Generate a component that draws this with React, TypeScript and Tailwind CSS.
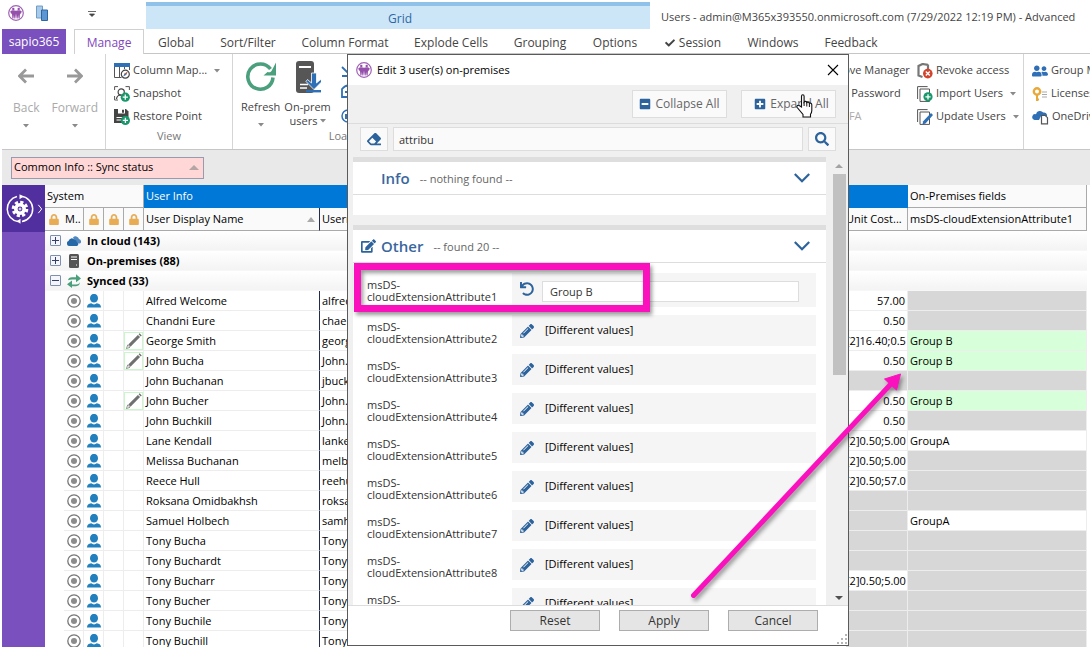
import type { ReactNode } from "react";
import {
  FaCheck,
  FaEdit,
  FaEraser,
  FaKey,
  FaLock,
  FaMinusSquare,
  FaPencilAlt,
  FaPlusSquare,
  FaSearch,
  FaUndo,
  FaUserFriends,
} from "react-icons/fa";

type IconProps = { className?: string };

function Logo({ className = "size-4" }: IconProps) {
  return (
    <svg viewBox="0 0 16 16" className={className} aria-hidden="true">
      <circle cx="8" cy="8" r="7.3" fill="#fff" stroke="#a062b5" strokeWidth="1.2" />
      <circle cx="5.3" cy="3.9" r="1.2" fill="#9450ab" />
      <circle cx="10.7" cy="3.9" r="1.2" fill="#9450ab" />
      <path d="M2.2 6.4c1.200-1.300 4-1.500 5.800-.6 1.800-.9 4.600-.7 5.800.6l-1.200 3.200-.5-1.800-.5 5.600h-1l-.5-3.400-.5 3.400h-.9L8 8.500l-.7 4.900h-.9l-.5-3.400-.5 3.400h-1l-.5-5.600-.5 1.800z" fill="#9450ab" />
    </svg>
  );
}

function PlusBadge({ x, y }: { x: number; y: number }) {
  return (
    <g transform={`translate(${x} ${y})`}>
      <circle r="4.600" fill="#17976a" />
      <path d="M-2.600 0h5.200M0-2.600v5.200" stroke="#fff" strokeWidth="1.300" />
    </g>
  );
}

function ColumnMapIcon() {
  return (
    <svg viewBox="0 0 16 16" className="size-4">
      <path d="M.5 3v11.500h7M5.500 3v11M10.500 3v3M15.500 3v4" fill="none" stroke="#555" />
      <path d="M0 0h16v4H0z" fill="#2f6fb5" />
      <circle cx="11.300" cy="11.200" r="4" fill="#fff" stroke="#444" strokeWidth="1.200" />
      <path d="M13.500 9l-1.500 3-2.800 1.500 1.300-3z" fill="#2f6fb5" />
      <path d="M13.500 9l-1.500 3-1.500-1.500z" fill="#d35a2a" />
    </svg>
  );
}

function SnapshotIcon() {
  return (
    <svg viewBox="0 0 16 16" className="size-4">
      <path d="M.6 4V.6H4M11.500.6h3.900V4M.6 10v4H4" fill="none" stroke="#555" />
      <circle cx="7.200" cy="6" r="3.100" fill="none" stroke="#444" strokeWidth="1.200" />
      <path d="M2.500 13c.3-3 2-4 4.500-4" fill="none" stroke="#444" strokeWidth="1.200" />
      <PlusBadge x={11.3} y={11.2} />
    </svg>
  );
}

function RestoreIcon() {
  return (
    <svg viewBox="0 0 16 16" className="size-4">
      <path d="M0 0h12l2.500 2.500V14H0z" fill="#444" />
      <path d="M4 0h7v4.500H4z" fill="#fff" />
      <path d="M8 .8h2v3H8z" fill="#444" />
      <path d="M2.500 8h9v1h-9zM2.500 10.500h5v1h-5z" fill="#fff" />
      <PlusBadge x={11.4} y={11.4} />
    </svg>
  );
}

function RefreshIcon() {
  return (
    <svg viewBox="0 0 32 32" className="size-8">
      <path d="M28 16.500A12.600 12.600 0 1 1 25.500 8" fill="none" stroke="#4a9f7c" strokeWidth="3.600" />
      <path d="M31 1.500v13H18.500l4-3.500c2 .5 3 .4 4-1z" fill="#4a9f7c" />
    </svg>
  );
}

function ServerDownIcon() {
  return (
    <svg viewBox="0 0 26 32" className="h-8 w-[26px]">
      <rect x="1" y="0" width="18" height="32" rx="3" fill="#565656" />
      <path d="M4 5h12v2H4z" fill="#fff" />
      <path d="M5 23.500h8M5 27h7" stroke="#fff" strokeWidth="1.400" />
      <path d="M16.500 12h5v10l4-3.500 1.500 2L19 28.600 11 20.500l1.500-2 4 3.500z" fill="#2f6fb5" stroke="#fff" strokeWidth=".8" />
      <path d="M11 29h15v2.400H11z" fill="#2f6fb5" />
    </svg>
  );
}

function RevokeIcon() {
  return (
    <svg viewBox="0 0 16 16" className="size-4">
      <path d="M11 1.600v5M11 1.800L5.500 1 1.500 3v9.500l4 1.500" fill="none" stroke="#777" strokeWidth="2.200" />
      <circle cx="10.800" cy="10.600" r="4.800" fill="#d2422c" />
      <path d="M8.800 8.600l4 4M12.800 8.600l-4 4" stroke="#fff" strokeWidth="1.400" />
    </svg>
  );
}

function PagesIcon({ edit = false }: { edit?: boolean }) {
  return (
    <svg viewBox="0 0 16 16" className="size-4">
      <path d="M.6 13V.6h10" fill="none" stroke="#555" />
      <path d="M3 15.400V3h9.500v12.400z" fill="#fff" stroke="#555" />
      {edit ? (
        <path d="M14 4l2 2-7.500 8.500-3 1 .7-3.200z" fill="#2f6fb5" />
      ) : (
        <PlusBadge x={11} y={10.8} />
      )}
    </svg>
  );
}

function OneDriveIcon() {
  return (
    <svg viewBox="0 0 17 16" className="h-4 w-[17px]">
      <path d="M4 5.200A4 4 0 0 1 11.200 3.600 3 3 0 0 1 15 7H9L7 11H2.500A2.900 2.900 0 0 1 4 5.200z" fill="#2f6fb5" />
      <path d="M9.500 6.500h3.800l2.200 2.200v6.200h-6z" fill="#fff" stroke="#555" strokeWidth="1.200" />
    </svg>
  );
}

function PersonIcon() {
  return (
    <svg viewBox="0 0 14 14" className="mx-auto size-3.5">
      <ellipse cx="7" cy="4.200" rx="4" ry="4.400" fill="#2180bd" />
      <path d="M0 13.500c0-2.800 1.500-3.700 4.200-4.200Q7 11.500 9.800 9.300c2.700.5 4.200 1.400 4.200 4.200z" fill="#2180bd" />
    </svg>
  );
}

function StatusIcon() {
  return (
    <svg viewBox="0 0 14 14" className="mx-auto size-3.5">
      <circle cx="7" cy="7" r="6.200" fill="none" stroke="#777" strokeWidth="1.300" />
      <circle cx="7" cy="7" r="3" fill="#8c8c8c" />
    </svg>
  );
}

function EditedIcon() {
  return (
    <span className="flex h-[18px] w-[19px] items-center justify-center border border-[#c9f7c9]">
      <svg viewBox="0 0 16 16" className="size-4">
        <path d="M.4 15.600l1.300-3.600 2.300 2.300z" fill="none" stroke="#6b6b6b" strokeWidth=".7" />
        <path d="M2.300 11.500L11.900 1.900l2.200 2.200-9.600 9.600z" fill="#707070" />
        <path d="M12.600 1.200l1-.9 2.100 2.100-.9 1z" fill="#6b6b6b" />
      </svg>
    </span>
  );
}

function SyncIcon() {
  return (
    <svg viewBox="0 0 14 14" className="size-3.5">
      <path d="M1 6.200Q1.500 3.200 5 3.200h4V.3l5 4.200-5 3.700V5.600H5Q3 5.600 1 6.200z" fill="#4a9f7c" />
      <path d="M13 7.800Q12.500 10.400 9 10.400H5V6.500L0 10.300l5 3.700v-1.800h4Q13 12 13 7.800z" fill="#4a9f7c" />
    </svg>
  );
}

function ServerIcon() {
  return (
    <svg viewBox="0 0 14 14" className="size-3.5">
      <rect x="2" width="10" height="14" rx="1.500" fill="#555" />
      <path d="M4 3h6M4 5.500h6M9 11h1" stroke="#fff" />
    </svg>
  );
}

function CloudsIcon() {
  return (
    <svg viewBox="0 0 14 14" className="size-3.5">
      <path d="M6 3.500a3.500 3.500 0 0 1 6 1.500 2.500 2.500 0 0 1 1 4.500H9z" fill="#4f86c0" />
      <path d="M1.500 7a3.300 3.300 0 0 1 6-1.200 2.400 2.400 0 0 1 2.300 2.400 2 2 0 0 1 .2 3.800H2.500A2.600 2.600 0 0 1 1.500 7z" fill="#2667a8" />
    </svg>
  );
}

function Caret({ className = "" }: IconProps) {
  return (
    <svg viewBox="0 0 6 4" className={`h-1 w-1.5 shrink-0 ${className}`} aria-hidden="true">
      <path d="M0 0h6L3 3.500z" fill="#8a8a8a" />
    </svg>
  );
}

function GearCycle() {
  return (
    <svg viewBox="0 0 30 30" className="size-[30px]">
      <g fill="none" stroke="#fff">
        <path d="M16 2.300A12.700 12.700 0 0 1 17 27.500M13 27.500A12.700 12.700 0 0 1 12 2.600" strokeWidth="1.500" />
        <circle cx="15" cy="15" r="6.800" strokeWidth="3" strokeDasharray="3.200 2.140" />
        <circle cx="15" cy="15" r="4.200" strokeWidth="3.600" />
        <circle cx="15" cy="15" r="1" strokeWidth="1" />
      </g>
      <path d="M14.500.2l4.200 2.300-4.200 2.700zM15.500 24.800v5l-4-2.600z" fill="#fff" />
    </svg>
  );
}

const TABS = [
  ["Global", "w-16"],
  ["Sort/Filter", "w-20"],
  ["Column Format", "w-[114px]"],
  ["Explode Cells", "w-[98px]"],
  ["Grouping", "w-20"],
  ["Options", "w-[70px]"],
  ["Session", "w-[86px]"],
  ["Windows", "w-[74px]"],
  ["Feedback", "w-[82px]"],
];

function RibbonItem({ icon, label, menu = false, muted = false }: { icon?: ReactNode; label: string; menu?: boolean; muted?: boolean }) {
  return (
    <button className={`flex h-[23px] items-center gap-[3px] whitespace-nowrap ${muted ? "text-[#aaa]" : ""}`}>
      {icon}
      <span>{label}</span>
      {menu && <Caret className="ml-1" />}
    </button>
  );
}

function NavButton({ label, back = false }: { label: string; back?: boolean }) {
  return (
    <button className="flex flex-col items-center text-[#aaa]">
      <svg viewBox="0 0 16 16" className={`mt-1.5 mb-3.5 size-4 ${back ? "rotate-180" : ""}`}>
        <path d="M0 8h14M8 1.500L14.500 8 8 14.500" fill="none" stroke="#999" strokeWidth="2.800" />
      </svg>
      <span className="leading-5">{label}</span>
      <Caret className="mt-1.5" />
    </button>
  );
}

function Ribbon() {
  return (
    <section className="flex h-24 shrink-0 overflow-hidden border-b border-[#c6c6c6] text-[11px] text-[#444]">
      <div className="flex w-[104px] shrink-0 items-start justify-center gap-3 border-r border-[#d5d5d5] pt-2 pl-1 text-[12px]">
        <NavButton label="Back" back />
        <NavButton label="Forward" />
      </div>
      <div className="flex w-[127px] shrink-0 flex-col border-r border-[#d5d5d5] pt-[5px] pl-2">
        <RibbonItem icon={<ColumnMapIcon />} label="Column Map..." menu />
        <RibbonItem icon={<SnapshotIcon />} label="Snapshot" />
        <RibbonItem icon={<RestoreIcon />} label="Restore Point" />
        <span className="pr-2 text-center leading-4 text-[#777]">View</span>
      </div>
      <div className="flex w-[587px] shrink-0 items-start gap-1 pt-[7px] pl-2">
        <button className="flex flex-col items-center">
          <RefreshIcon />
          <span className="mt-1 leading-5">Refresh</span>
          <Caret className="mt-1.5" />
        </button>
        <button className="flex flex-col items-center">
          <ServerDownIcon />
          <span className="mt-1.5 leading-4">On-prem</span>
          <span className="flex items-center gap-0.5 leading-3">
            users <Caret />
          </span>
        </button>
        <div className="ml-1.5 flex flex-col items-start">
          <svg viewBox="0 0 14 67" className="h-[67px] w-3.5">
            <path d="M7 1v10M1 6l6 6 6-6M1 15h12M1 36h12v-8Q7 21 1 28zM4 31h6" fill="none" stroke="#2f6fb5" strokeWidth="1.800" />
            <circle cx="7" cy="55" r="6" fill="none" stroke="#2f6fb5" strokeWidth="1.500" />
            <path d="M4 53h6v5H4z" fill="#2f6fb5" />
          </svg>
          <span className="-ml-3 leading-4 text-[#777]">Load</span>
        </div>
      </div>
      <div className="flex w-[97px] shrink-0 flex-col items-start pt-[5px]">
        <RibbonItem label="Remove Manager" />
        <RibbonItem label="Reset Password" />
        <RibbonItem label="Set MFA" muted />
      </div>
      <div className="flex w-[107px] shrink-0 flex-col items-start border-r border-[#d5d5d5] pt-[5px]">
        <RibbonItem icon={<RevokeIcon />} label="Revoke access" />
        <RibbonItem icon={<PagesIcon />} label="Import Users" menu />
        <RibbonItem icon={<PagesIcon edit />} label="Update Users" menu />
      </div>
      <div className="flex flex-col items-start pt-[5px] pl-2">
        <RibbonItem icon={<FaUserFriends className="size-4 text-[#2f6fb5]" />} label="Group M" />
        <RibbonItem
          icon={
            <svg viewBox="0 0 16 16" className="size-4">
              <circle cx="5" cy="5.500" r="3.200" fill="none" stroke="#e8a93a" strokeWidth="2.400" />
              <path d="M5 8v7M5 13.500h2" stroke="#e8a93a" strokeWidth="2" />
              <path d="M10 6h5M10 8.500h5M10 11h5" stroke="#aaa" />
            </svg>
          }
          label="Licenses"
        />
        <RibbonItem icon={<OneDriveIcon />} label="OneDrive" />
      </div>
    </section>
  );
}

type Row = { name: string; user: string; cost?: string; attr?: string; edited?: boolean };

const ROWS: Row[] = [
  { name: "Alfred Welcome", user: "alfred", cost: "57.00" },
  { name: "Chandni Eure", user: "chae", cost: "0.50" },
  { name: "George Smith", user: "georg", cost: "[2]16.40;0.5", attr: "Group B", edited: true },
  { name: "John Bucha", user: "John.", cost: "0.50", attr: "Group B", edited: true },
  { name: "John Buchanan", user: "jbuck" },
  { name: "John Bucher", user: "John.", cost: "0.50", attr: "Group B", edited: true },
  { name: "John Buchkill", user: "John.", cost: "0.50" },
  { name: "Lane Kendall", user: "lanke", cost: "[2]0.50;5.00", attr: "GroupA" },
  { name: "Melissa Buchanan", user: "melb", cost: "[2]0.50;5.00" },
  { name: "Reece Hull", user: "reehu", cost: "[2]0.50;57.0" },
  { name: "Roksana Omidbakhsh", user: "roksa" },
  { name: "Samuel Holbech", user: "samh", attr: "GroupA" },
  { name: "Tony Bucha", user: "Tony." },
  { name: "Tony Buchardt", user: "Tony." },
  { name: "Tony Bucharr", user: "Tony.", cost: "[2]0.50;5.00" },
  { name: "Tony Bucher", user: "Tony." },
  { name: "Tony Buchile", user: "Tony." },
  { name: "Tony Buchill", user: "Tony." },
];

const GROUPS = [
  { label: "In cloud (143)", icon: <CloudsIcon />, open: false },
  { label: "On-premises (88)", icon: <ServerIcon />, open: false },
  { label: "Synced (33)", icon: <SyncIcon />, open: true },
];

const lock = <FaLock className="mx-auto h-[11px] w-2.5 text-[#e8ac55]" />;

function UsersTable() {
  return (
    <table className="w-full table-fixed border-separate border-spacing-0 text-[11px] whitespace-nowrap text-black">
      <colgroup>
        <col className="w-[19px]" />
        <col className="w-5" />
        <col className="w-5" />
        <col className="w-5" />
        <col className="w-5" />
        <col className="w-44" />
        <col />
        <col className="w-[62px]" />
        <col className="w-[179px]" />
      </colgroup>
      <thead className="text-left">
        <tr className="h-[23px]">
          <th colSpan={5} className="border-r border-b border-[#aaa] bg-[#fafafa] pl-0.5 font-normal">System</th>
          <th colSpan={3} className="bg-[#0078d7] pl-0.5 font-normal text-white">User Info</th>
          <th className="border-r border-b border-[#aaa] bg-[#fafafa] pl-0.5 font-normal">On-Premises fields</th>
        </tr>
        <tr className="h-[23px] bg-[#fafafa]">
          <th colSpan={2} className="border-r border-b border-[#aaa] font-normal">
            <span className="flex items-center gap-1.5 pl-1">
              <FaLock className="h-[11px] w-2.5 text-[#e8ac55]" />
              M..
            </span>
          </th>
          <th className="border-r border-b border-[#aaa]">{lock}</th>
          <th className="border-r border-b border-[#aaa]">{lock}</th>
          <th className="border-r border-b border-[#aaa]">{lock}</th>
          <th className="border-r border-b border-[#aaa] border-r-[#222c50] font-normal">
            <span className="flex items-center justify-between pr-1 pl-0.5">
              User Display Name
              <svg viewBox="0 0 8 5" className="h-[5px] w-2">
                <path d="M0 5h8L4 0z" fill="#aaa" />
              </svg>
            </span>
          </th>
          <th className="border-b border-[#aaa] pl-0.5 font-normal">Usern</th>
          <th className="overflow-hidden border-r border-b border-[#aaa] font-normal">Unit Cost...</th>
          <th className="border-r border-b border-[#aaa] pl-0.5 font-normal">msDS-cloudExtensionAttribute1</th>
        </tr>
      </thead>
      <tbody>
        {GROUPS.map((g) => (
          <tr key={g.label} className="h-5 bg-linear-to-b from-white to-[#f3f3f3]">
            <td colSpan={9} className="border-b border-[#f7f7f7]">
              <span className="flex items-center gap-1.5 pl-[5px] font-bold leading-[18px]">
                <button
                  aria-label={g.open ? "Collapse group" : "Expand group"}
                  className="flex size-[11px] items-center justify-center rounded-[1px] border border-[#7f8fae] bg-[#f4f6fb]"
                >
                  <svg viewBox="0 0 7 7" className="size-[7px]">
                    <path d={g.open ? "M0 3.500h7" : "M0 3.500h7M3.500 0v7"} stroke="#33406b" />
                  </svg>
                </button>
                {g.icon}
                <span>{g.label}</span>
              </span>
            </td>
          </tr>
        ))}
        {ROWS.map((r, i) => (
          <tr key={i} className="h-5">
            <td />
            <td className="border-r border-b border-[#ededed]"><StatusIcon /></td>
            <td className="border-r border-b border-[#ededed]"><PersonIcon /></td>
            <td className="border-r border-b border-[#ededed]" />
            <td className="border-r border-b border-[#ededed]">{r.edited && <EditedIcon />}</td>
            <td className="border-r border-b border-[#ededed] border-r-[#222c50] pt-px pl-0.5">{r.name}</td>
            <td className="border-b border-[#ededed] pt-px pl-0.5">{r.user}</td>
            <td className={`overflow-hidden border-r border-b border-[#ededed] pt-px pr-0.5 text-right ${r.cost ? "" : "bg-[#d7d7d7]"}`}>{r.cost}</td>
            <td className={`border-r border-b border-[#ededed] pt-px pl-0.5 ${r.edited ? "bg-[#d7ffd9]" : r.attr ? "" : "bg-[#d7d7d7]"}`}>{r.attr}</td>
          </tr>
        ))}
      </tbody>
    </table>
  );
}

function SectionHead({ title, note, editable = false }: { title: string; note: string; editable?: boolean }) {
  return (
    <div className="flex h-[38px] items-center border-t-[5px] border-b border-t-[#dedede] border-b-[#ddd] bg-white pr-4 pl-2">
      <span className="w-5">{editable && <FaEdit className="h-3.5 w-[15px] text-[#2d639c]" />}</span>
      <h2 className="text-[15px] font-semibold text-[#3a679d]">{title}</h2>
      <span className="ml-2.5 pt-0.5 text-[11px] text-[#666]">{note}</span>
      <svg viewBox="0 0 16 10" className="ml-auto h-2.5 w-4">
        <path d="M.8 1L8 8.200 15.200 1" fill="none" stroke="#2d639c" strokeWidth="2.200" />
      </svg>
    </div>
  );
}

function AttributeLabel({ n, htmlFor }: { n: number; htmlFor?: string }) {
  return (
    <label htmlFor={htmlFor} className="w-[145px] shrink-0 pt-1.5 pr-2 leading-3">
      {`msDS-cloudExtensionAttribute${n}`}
    </label>
  );
}

function EditDialog() {
  return (
    <div
      role="dialog"
      aria-label="Edit 3 user(s) on-premises"
      className="absolute top-[54px] bottom-px left-[347px] flex w-[502px] flex-col border border-[#5a5a5a] bg-[#f0f0f0] text-[11px] text-[#333]"
    >
      <header className="flex h-[30px] shrink-0 items-center gap-[5px] bg-white pr-[9px] pl-2 text-black">
        <Logo />
        <span>Edit 3 user(s) on-premises</span>
        <button aria-label="Close" className="ml-auto">
          <svg viewBox="0 0 12 12" className="size-3">
            <path d="M1 1l10 10M11 1L1 11" stroke="#000" strokeWidth="1.100" />
          </svg>
        </button>
      </header>
      <div className="flex h-[39px] shrink-0 items-center justify-end gap-3.5 border-b border-[#dcdcdc] pr-3 text-[12px] text-[#666]">
        <button className="flex h-7 w-[95px] items-center justify-center gap-1 border border-[#ddd] bg-[#fafafa] whitespace-nowrap">
          <FaMinusSquare className="size-3 text-[#2d639c]" />
          Collapse All
        </button>
        <button className="flex h-7 w-[95px] items-center justify-center gap-1 border border-[#ddd] bg-[#fafafa] pl-1.5 whitespace-nowrap">
          <FaPlusSquare className="size-3 text-[#2d639c]" />
          Expand All
        </button>
      </div>
      <div className="flex h-[33px] shrink-0 items-center gap-[5px] px-3 pt-px pb-1">
        <button aria-label="Clear search" className="flex h-6 w-7 items-center justify-center border border-[#ddd] bg-[#fafafa]">
          <FaEraser className="size-3.5 text-[#2d639c]" />
        </button>
        <input aria-label="Search text" defaultValue="attribu" className="h-6 min-w-0 flex-1 border border-[#ddd] bg-[#fafafa] px-[5px] text-[11px] outline-none" />
        <button aria-label="Search" className="flex h-6 w-7 items-center justify-center border border-[#ddd] bg-[#fafafa]">
          <FaSearch className="size-3.5 text-[#2d639c]" />
        </button>
      </div>
      <div className="flex min-h-0 flex-1">
        <div className="min-w-0 flex-1 overflow-hidden pl-[5px]">
          <SectionHead title="Info" note="-- nothing found --" />
          <div className="mb-2.5 h-5 bg-white" />
          <SectionHead title="Other" note="-- found 20 --" editable />
          <div className="flex flex-col gap-2 bg-white pt-2.5 pr-2.5 pl-3.5">
            <div className="flex h-[34px]">
              <AttributeLabel n={1} htmlFor="attribute-1" />
              <div className="flex flex-1 items-center bg-[#f5f5f5] pt-0.5 pr-[17px] pl-2">
                <button aria-label="Undo" className="mr-2 mb-1">
                  <FaUndo className="size-3.5 text-[#2d639c]" />
                </button>
                <input id="attribute-1" defaultValue="Group B" className="h-[21px] min-w-0 flex-1 border border-[#ddd] bg-white px-[7px] text-[11px] outline-none" />
              </div>
            </div>
            {[2, 3, 4, 5, 6, 7, 8, 9].map((n) => (
              <div key={n} className="flex h-[31px] shrink-0">
                <AttributeLabel n={n} />
                <div className="flex flex-1 items-center gap-[11px] bg-[#f5f5f5] pl-2 text-black">
                  <button aria-label={`Edit attribute ${n}`}>
                    <FaPencilAlt className="size-3.5 text-[#2d639c]" />
                  </button>
                  <span>[Different values]</span>
                </div>
              </div>
            ))}
          </div>
        </div>
        <div className="flex w-[22px] flex-col items-end pt-[7px] pr-0.5 pb-[5px]">
          <svg viewBox="0 0 8 4" className="mr-[3px] h-1 w-2">
            <path d="M0 4h8L4 0z" fill="#a3a3a3" />
          </svg>
          <div className="mt-1.5 h-[201px] w-[13px] bg-[#c1c1c1]" />
          <svg viewBox="0 0 8 4" className="mt-auto mr-[3px] h-1 w-2">
            <path d="M0 0h8L4 4z" fill="#505050" />
          </svg>
        </div>
      </div>
      <footer className="relative flex h-10 shrink-0 justify-end gap-[19px] border-t border-[#ddd] bg-white pt-1 pr-[30px] text-[12px]">
        {["Reset", "Apply", "Cancel"].map((b) => (
          <button key={b} className="h-[21px] w-[90px] border border-[#adadad] bg-[#e5e5e5] leading-4">
            {b}
          </button>
        ))}
        <svg viewBox="0 0 12 12" className="absolute right-0 bottom-0 size-3">
          <path d="M9 1h2v2H9zM9 5h2v2H9zM5 5h2v2H5zM9 9h2v2H9zM5 9h2v2H5zM1 9h2v2H1z" fill="#b5b5b5" />
        </svg>
      </footer>
    </div>
  );
}

export default function App() {
  return (
    <div className="relative flex h-screen flex-col overflow-hidden bg-white pl-0.5 font-['Open_Sans',sans-serif] text-[12px]">
      <header className="flex h-[29px] shrink-0 text-[#444]">
        <div className="flex w-36 shrink-0 items-start gap-3 pt-[5px] pl-1.5">
          <Logo />
          <svg viewBox="0 0 12 16" className="h-4 w-3">
            <path d="M.5 1h6v12h-6z" fill="#a9cbe8" stroke="#6f9cc8" />
            <path d="M5.500 5h6v10.500h-6z" fill="#5c97d2" stroke="#2c66a5" />
          </svg>
          <svg viewBox="0 0 8 6" className="mt-1.5 ml-7 h-1.5 w-2">
            <path d="M0 .5h8M1.500 3h5L4 5.500z" fill="#444" stroke="#444" strokeWidth=".8" />
          </svg>
        </div>
        <div className="mt-0.5 flex w-[504px] shrink-0 items-end justify-center border-t-4 border-[#8fc1e9] bg-[#cde6f7] pl-1 leading-5 text-[#2c66a5]">Grid</div>
        <h1 className="pl-[11px] text-[11px] leading-[34px] whitespace-nowrap">Users - admin@M365x393550.onmicrosoft.com (7/29/2022 12:19 PM) - Advanced</h1>
      </header>
      <nav className="flex h-[25px] shrink-0 text-[#444]">
        <button className="mr-2 w-16 bg-[#7a50be] text-white">sapio365</button>
        <button className="w-[70px] border border-b-0 border-[#d0d0d0] pt-0.5 text-[#8146bd]">Manage</button>
        <div className="flex flex-1 border-b border-[#c6c6c6] pt-[3px]">
          {TABS.map(([t, w]) => (
            <button key={t} className={`flex shrink-0 items-center justify-center gap-1 whitespace-nowrap ${w}`}>
              {t === "Session" && <FaCheck className="size-2.5" />}
              {t}
            </button>
          ))}
        </div>
      </nav>
      <Ribbon />
      <div className="flex h-[35px] shrink-0 items-center bg-[#e9e9e9] pl-[9px]">
        <button className="flex h-[22px] w-[193px] items-center justify-between border border-[#9a9aae] bg-[#ffd7d7] pr-1 pl-0.5 text-[11px]">
          Common Info :: Sync status
          <svg viewBox="0 0 10 5" className="h-[5px] w-2.5">
            <path d="M0 5h10L5 0z" fill="#b5a5a5" />
          </svg>
        </button>
      </div>
      <main className="flex min-h-0 flex-1">
        <aside className="w-[43px] shrink-0 bg-[#7a50be]">
          <button aria-label="Open automation panel" className="flex h-[47px] w-full items-center gap-0.5 bg-[#522f9f] pl-[3px]">
            <GearCycle />
            <svg viewBox="0 0 6 12" className="h-2.5 w-1.5">
              <path d="M1 1l4 5-4 5" fill="none" stroke="#fff" strokeWidth="1.200" />
            </svg>
          </button>
        </aside>
        <div className="min-w-0 flex-1 overflow-hidden pr-[3px]">
          <UsersTable />
        </div>
      </main>
      <EditDialog />
      <svg viewBox="0 0 18 24" className="absolute top-[94px] left-[796px] h-6 w-[18px]">
        <path
          d="M5.500 13V2.200q0-1.500 1.300-1.500t1.300 1.500V8q.5-.8 1.500-.6t1.200 1.200q.6-.6 1.500-.4t1.100 1.200q.7-.5 1.500-.2.900.4.900 1.800v5.500q0 2-1.300 3.800V23H7v-2.500L1.200 13.500q-.8-1.300.2-2t2.200.3z"
          fill="#fff"
          stroke="#111"
          strokeWidth="1.100"
        />
        <path d="M8.100 8v4M10.800 8.500v4M13.400 9.500v3.500" stroke="#111" />
      </svg>
      <div className="pointer-events-none absolute top-[263px] left-[354px] h-[49px] w-[296px] border-[7px] border-[#fb10bd] shadow-[2px_3px_4px_rgba(0,0,0,0.4),inset_2px_3px_4px_rgba(0,0,0,0.4)]" />
      <svg viewBox="0 0 220 236" className="pointer-events-none absolute top-[370px] left-[688px] h-[236px] w-[220px] drop-shadow-[2px_3px_2px_rgba(0,0,0,0.4)]">
        <path d="M5.500 225.500L202 15" stroke="#fb10bd" strokeWidth="5" strokeLinecap="round" />
        <path d="M212.500 4l-4 16-12-11z" fill="#fb10bd" stroke="#fb10bd" />
      </svg>
    </div>
  );
}
